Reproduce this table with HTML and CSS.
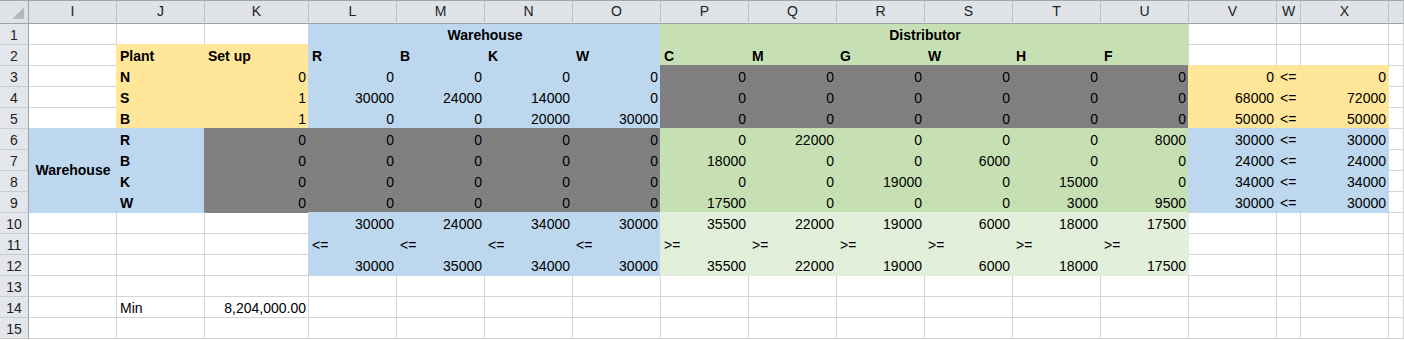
FILE: index.html
```html
<!DOCTYPE html>
<html lang="en">
<head>
<meta charset="utf-8">
<title>Transport model</title>
<link rel="stylesheet" href="styles.css">
</head>
<body>
<div class="sheet">
  <!-- column headers -->
  <div class="ch corner"><svg class="tri" width="29" height="22" viewBox="0 0 29 22"><polygon points="25,6 25,18 13,18" fill="#b4b8bd"/></svg></div>
  <div class="ch">I</div><div class="ch">J</div><div class="ch">K</div><div class="ch">L</div><div class="ch">M</div><div class="ch">N</div><div class="ch">O</div><div class="ch">P</div><div class="ch">Q</div><div class="ch">R</div><div class="ch">S</div><div class="ch">T</div><div class="ch">U</div><div class="ch">V</div><div class="ch">W</div><div class="ch">X</div><div class="ch"></div>

  <!-- row 1 -->
  <div class="rh">1</div><div class="c"></div><div class="c"></div><div class="c"></div>
  <div class="c bl b mid s4">Warehouse</div>
  <div class="c g b mid s6">Distributor</div>
  <div class="c"></div><div class="c"></div><div class="c"></div><div class="c"></div>

  <!-- row 2 -->
  <div class="rh">2</div><div class="c"></div>
  <div class="c y b">Plant</div><div class="c y b">Set up</div>
  <div class="c bl b">R</div><div class="c bl b">B</div><div class="c bl b">K</div><div class="c bl b">W</div>
  <div class="c g b">C</div><div class="c g b">M</div><div class="c g b">G</div><div class="c g b">W</div><div class="c g b">H</div><div class="c g b">F</div>
  <div class="c"></div><div class="c"></div><div class="c"></div><div class="c"></div>

  <!-- row 3 -->
  <div class="rh">3</div><div class="c"></div>
  <div class="c y b">N</div><div class="c y n">0</div>
  <div class="c bl n">0</div><div class="c bl n">0</div><div class="c bl n">0</div><div class="c bl n">0</div>
  <div class="c dk n">0</div><div class="c dk n">0</div><div class="c dk n">0</div><div class="c dk n">0</div><div class="c dk n">0</div><div class="c dk n">0</div>
  <div class="c y n">0</div><div class="c y">&lt;=</div><div class="c y n">0</div><div class="c"></div>

  <!-- row 4 -->
  <div class="rh">4</div><div class="c"></div>
  <div class="c y b">S</div><div class="c y n">1</div>
  <div class="c bl n">30000</div><div class="c bl n">24000</div><div class="c bl n">14000</div><div class="c bl n">0</div>
  <div class="c dk n">0</div><div class="c dk n">0</div><div class="c dk n">0</div><div class="c dk n">0</div><div class="c dk n">0</div><div class="c dk n">0</div>
  <div class="c y n">68000</div><div class="c y">&lt;=</div><div class="c y n">72000</div><div class="c"></div>

  <!-- row 5 -->
  <div class="rh">5</div><div class="c"></div>
  <div class="c y b">B</div><div class="c y n">1</div>
  <div class="c bl n">0</div><div class="c bl n">0</div><div class="c bl n">20000</div><div class="c bl n">30000</div>
  <div class="c dk n">0</div><div class="c dk n">0</div><div class="c dk n">0</div><div class="c dk n">0</div><div class="c dk n">0</div><div class="c dk n">0</div>
  <div class="c y n">50000</div><div class="c y">&lt;=</div><div class="c y n">50000</div><div class="c"></div>

  <!-- row 6 -->
  <div class="rh">6</div>
  <div class="c bl b mid vc rs4">Warehouse</div>
  <div class="c bl b">R</div>
  <div class="c dk n">0</div><div class="c dk n">0</div><div class="c dk n">0</div><div class="c dk n">0</div><div class="c dk n">0</div>
  <div class="c g n">0</div><div class="c g n">22000</div><div class="c g n">0</div><div class="c g n">0</div><div class="c g n">0</div><div class="c g n">8000</div>
  <div class="c bl n">30000</div><div class="c bl">&lt;=</div><div class="c bl n">30000</div><div class="c"></div>

  <!-- row 7 -->
  <div class="rh">7</div>
  <div class="c bl b">B</div>
  <div class="c dk n">0</div><div class="c dk n">0</div><div class="c dk n">0</div><div class="c dk n">0</div><div class="c dk n">0</div>
  <div class="c g n">18000</div><div class="c g n">0</div><div class="c g n">0</div><div class="c g n">6000</div><div class="c g n">0</div><div class="c g n">0</div>
  <div class="c bl n">24000</div><div class="c bl">&lt;=</div><div class="c bl n">24000</div><div class="c"></div>

  <!-- row 8 -->
  <div class="rh">8</div>
  <div class="c bl b">K</div>
  <div class="c dk n">0</div><div class="c dk n">0</div><div class="c dk n">0</div><div class="c dk n">0</div><div class="c dk n">0</div>
  <div class="c g n">0</div><div class="c g n">0</div><div class="c g n">19000</div><div class="c g n">0</div><div class="c g n">15000</div><div class="c g n">0</div>
  <div class="c bl n">34000</div><div class="c bl">&lt;=</div><div class="c bl n">34000</div><div class="c"></div>

  <!-- row 9 -->
  <div class="rh">9</div>
  <div class="c bl b">W</div>
  <div class="c dk n">0</div><div class="c dk n">0</div><div class="c dk n">0</div><div class="c dk n">0</div><div class="c dk n">0</div>
  <div class="c g n">17500</div><div class="c g n">0</div><div class="c g n">0</div><div class="c g n">0</div><div class="c g n">3000</div><div class="c g n">9500</div>
  <div class="c bl n">30000</div><div class="c bl">&lt;=</div><div class="c bl n">30000</div><div class="c"></div>

  <!-- row 10 -->
  <div class="rh">10</div><div class="c"></div><div class="c"></div><div class="c"></div>
  <div class="c bl n">30000</div><div class="c bl n">24000</div><div class="c bl n">34000</div><div class="c bl n">30000</div>
  <div class="c lg n">35500</div><div class="c lg n">22000</div><div class="c lg n">19000</div><div class="c lg n">6000</div><div class="c lg n">18000</div><div class="c lg n">17500</div>
  <div class="c"></div><div class="c"></div><div class="c"></div><div class="c"></div>

  <!-- row 11 -->
  <div class="rh">11</div><div class="c"></div><div class="c"></div><div class="c"></div>
  <div class="c bl">&lt;=</div><div class="c bl">&lt;=</div><div class="c bl">&lt;=</div><div class="c bl">&lt;=</div>
  <div class="c lg">&gt;=</div><div class="c lg">&gt;=</div><div class="c lg">&gt;=</div><div class="c lg">&gt;=</div><div class="c lg">&gt;=</div><div class="c lg">&gt;=</div>
  <div class="c"></div><div class="c"></div><div class="c"></div><div class="c"></div>

  <!-- row 12 -->
  <div class="rh">12</div><div class="c"></div><div class="c"></div><div class="c"></div>
  <div class="c bl n">30000</div><div class="c bl n">35000</div><div class="c bl n">34000</div><div class="c bl n">30000</div>
  <div class="c lg n">35500</div><div class="c lg n">22000</div><div class="c lg n">19000</div><div class="c lg n">6000</div><div class="c lg n">18000</div><div class="c lg n">17500</div>
  <div class="c"></div><div class="c"></div><div class="c"></div><div class="c"></div>

  <!-- row 13 -->
  <div class="rh">13</div><div class="c"></div><div class="c"></div><div class="c"></div>
  <div class="c"></div><div class="c"></div><div class="c"></div><div class="c"></div><div class="c"></div><div class="c"></div><div class="c"></div><div class="c"></div><div class="c"></div><div class="c"></div>
  <div class="c"></div><div class="c"></div><div class="c"></div><div class="c"></div>

  <!-- row 14 -->
  <div class="rh">14</div><div class="c"></div>
  <div class="c">Min</div><div class="c n">8,204,000.00</div>
  <div class="c"></div><div class="c"></div><div class="c"></div><div class="c"></div><div class="c"></div><div class="c"></div><div class="c"></div><div class="c"></div><div class="c"></div><div class="c"></div>
  <div class="c"></div><div class="c"></div><div class="c"></div><div class="c"></div>

  <!-- row 15 -->
  <div class="rh">15</div><div class="c"></div><div class="c"></div><div class="c"></div>
  <div class="c"></div><div class="c"></div><div class="c"></div><div class="c"></div><div class="c"></div><div class="c"></div><div class="c"></div><div class="c"></div><div class="c"></div><div class="c"></div>
  <div class="c"></div><div class="c"></div><div class="c"></div><div class="c"></div>
</div>
</body>
</html>
```

FILE: styles.css
```css
* {
  box-sizing: border-box;
}

html,
body {
  margin: 0;
  padding: 0;
  background: #ffffff;
}

body {
  width: 1404px;
  height: 340px;
  overflow: hidden;
  font-family: "Liberation Sans", Arial, sans-serif;
  font-size: 14px;
  color: #000000;
}

.sheet {
  display: grid;
  grid-template-columns: 29px 88px 88px 104px repeat(10, 88px) 88px 24px 88px 15px;
  grid-template-rows: 24px repeat(15, 21px);
}

/* column header strip */
.ch {
  display: flex;
  justify-content: center;
  align-items: flex-start;
  padding-top: 2px;
  line-height: 16px;
  color: #222222;
  background: #dfe3e8;
  border-top: 1px solid #a3a7ac;
  border-right: 1px solid #c0c4c9;
  border-bottom: 1px solid #9ea3a9;
  position: relative;
}

.corner {
  padding: 0;
  border-right-color: #9ea3a9;
}

.tri {
  display: block;
}

/* row number strip */
.rh {
  display: flex;
  justify-content: center;
  align-items: flex-end;
  padding-bottom: 1px;
  line-height: 16px;
  color: #222222;
  background: #e3e6ea;
  border-right: 1px solid #9ea3a9;
  border-bottom: 1px solid #c9cdd2;
  position: relative;
}

/* worksheet cell */
.c {
  display: flex;
  align-items: flex-end;
  padding: 0 2px 1px 3px;
  line-height: 16px;
  white-space: nowrap;
  border-right: 1px solid #d4d4d4;
  border-bottom: 1px solid #d4d4d4;
}

.n {
  justify-content: flex-end;
}

.b {
  font-weight: bold;
}

.mid {
  justify-content: center;
}

.vc {
  align-items: center;
}

.s4 {
  grid-column: span 4;
}

.s6 {
  grid-column: span 6;
}

.rs4 {
  grid-row: span 4;
}

/* fills hide the gridlines they touch */
.y {
  background: #ffe699;
  border-color: #ffe699;
  box-shadow: -1px -1px 0 #ffe699;
}

.bl {
  background: #bdd7ee;
  border-color: #bdd7ee;
  box-shadow: -1px -1px 0 #bdd7ee;
}

.g {
  background: #c6e0b4;
  border-color: #c6e0b4;
  box-shadow: -1px -1px 0 #c6e0b4;
}

.lg {
  background: #e2efda;
  border-color: #e2efda;
  box-shadow: -1px -1px 0 #e2efda;
}

.dk {
  background: #808080;
  border-color: #808080;
  box-shadow: -1px -1px 0 #808080;
}
```
